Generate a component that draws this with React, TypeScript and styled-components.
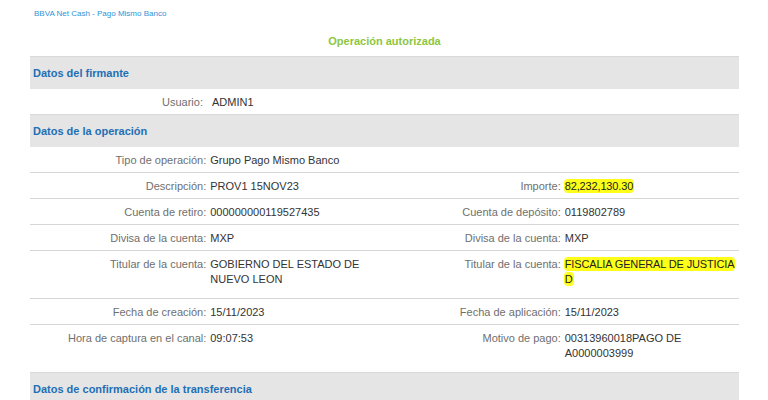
import React from "react";
import styled, { createGlobalStyle, css } from "styled-components";

const Global = createGlobalStyle`
  html, body { margin: 0; padding: 0; background: #ffffff; }
  body { font-family: "Liberation Sans", Arial, sans-serif; }
`;

const Page = styled.div`
  width: 709px;
  padding: 9px 29px 0 30px;
`;

const Brand = styled.div`
  font-size: 8px;
  line-height: 10px;
  color: #2f93d9;
  padding-left: 4px;
`;

const Status = styled.div`
  margin: 15px 0 8px;
  text-align: center;
  font-size: 11px;
  line-height: 14px;
  font-weight: bold;
  color: #8cc63f;
`;

const SectionBar = styled.div`
  height: 32px;
  border-top: 1px solid #d9d9d9;
  background: #e5e5e5;
  display: flex;
  align-items: center;
  padding-left: 3px;
  font-size: 11px;
  font-weight: bold;
  color: #1f6fb6;
`;

const UserRow = styled.div`
  display: grid;
  grid-template-columns: 177px 1fr;
  height: 25px;
  align-items: center;
  font-size: 11px;
`;

const UserLabel = styled.span`
  text-align: right;
  padding-right: 4px;
  color: #6f6f6f;
`;

const UserValue = styled.span`
  padding-left: 5px;
  color: #333333;
`;

const Row = styled.div<{ $tall?: boolean }>`
  display: grid;
  grid-template-columns: repeat(4, 1fr);
  font-size: 11px;
  line-height: 15px;
  padding: 6px 0 ${(p) => (p.$tall ? "11px" : "4px")};
  border-bottom: 1px solid #d6d6d6;
  ${(p) =>
    p.$tall &&
    css`
      min-height: 30px;
    `}
  &:last-child {
    border-bottom: none;
  }
`;

const Label = styled.div`
  text-align: right;
  padding-right: 1px;
  color: #6f6f6f;
`;

const Value = styled.div`
  padding-left: 3px;
  color: #333333;
`;

const Mark = styled.span`
  background: #ffff1a;
  border-radius: 3px;
  letter-spacing: -0.15px;
  box-shadow: 0 0 0 1px #ffff1a;
  box-decoration-break: clone;
  -webkit-box-decoration-break: clone;
  color: #222;
`;

type Cell = { label: string; value: string; mark?: boolean };

const rows: { left?: Cell; right?: Cell; tall?: boolean }[] = [
  { left: { label: "Tipo de operación:", value: "Grupo Pago Mismo Banco" } },
  {
    left: { label: "Descripción:", value: "PROV1 15NOV23" },
    right: { label: "Importe:", value: "82,232,130.30", mark: true },
  },
  {
    left: { label: "Cuenta de retiro:", value: "000000000119527435" },
    right: { label: "Cuenta de depósito:", value: "0119802789" },
  },
  {
    left: { label: "Divisa de la cuenta:", value: "MXP" },
    right: { label: "Divisa de la cuenta:", value: "MXP" },
  },
  {
    left: { label: "Titular de la cuenta:", value: "GOBIERNO DEL ESTADO DE NUEVO LEON" },
    right: { label: "Titular de la cuenta:", value: "FISCALIA GENERAL DE JUSTICIA D", mark: true },
    tall: true,
  },
  {
    left: { label: "Fecha de creación:", value: "15/11/2023" },
    right: { label: "Fecha de aplicación:", value: "15/11/2023" },
  },
  {
    left: { label: "Hora de captura en el canal:", value: "09:07:53" },
    right: { label: "Motivo de pago:", value: "00313960018PAGO DE A0000003999" },
    tall: true,
  },
];

const renderCell = (c?: Cell) => (
  <>
    <Label>{c ? c.label : ""}</Label>
    <Value>{c ? c.mark ? <Mark>{c.value}</Mark> : c.value : ""}</Value>
  </>
);

export default function App() {
  return (
    <>
      <Global />
      <Page>
        <Brand>BBVA Net Cash - Pago Mismo Banco</Brand>
        <Status>Operación autorizada</Status>
        <SectionBar>Datos del firmante</SectionBar>
        <UserRow>
          <UserLabel>Usuario:</UserLabel>
          <UserValue>ADMIN1</UserValue>
        </UserRow>
        <SectionBar>Datos de la operación</SectionBar>
        <div>
          {rows.map((r, i) => (
            <Row key={i} $tall={r.tall}>
              {renderCell(r.left)}
              {renderCell(r.right)}
            </Row>
          ))}
        </div>
        <SectionBar>Datos de confirmación de la transferencia</SectionBar>
      </Page>
    </>
  );
}
